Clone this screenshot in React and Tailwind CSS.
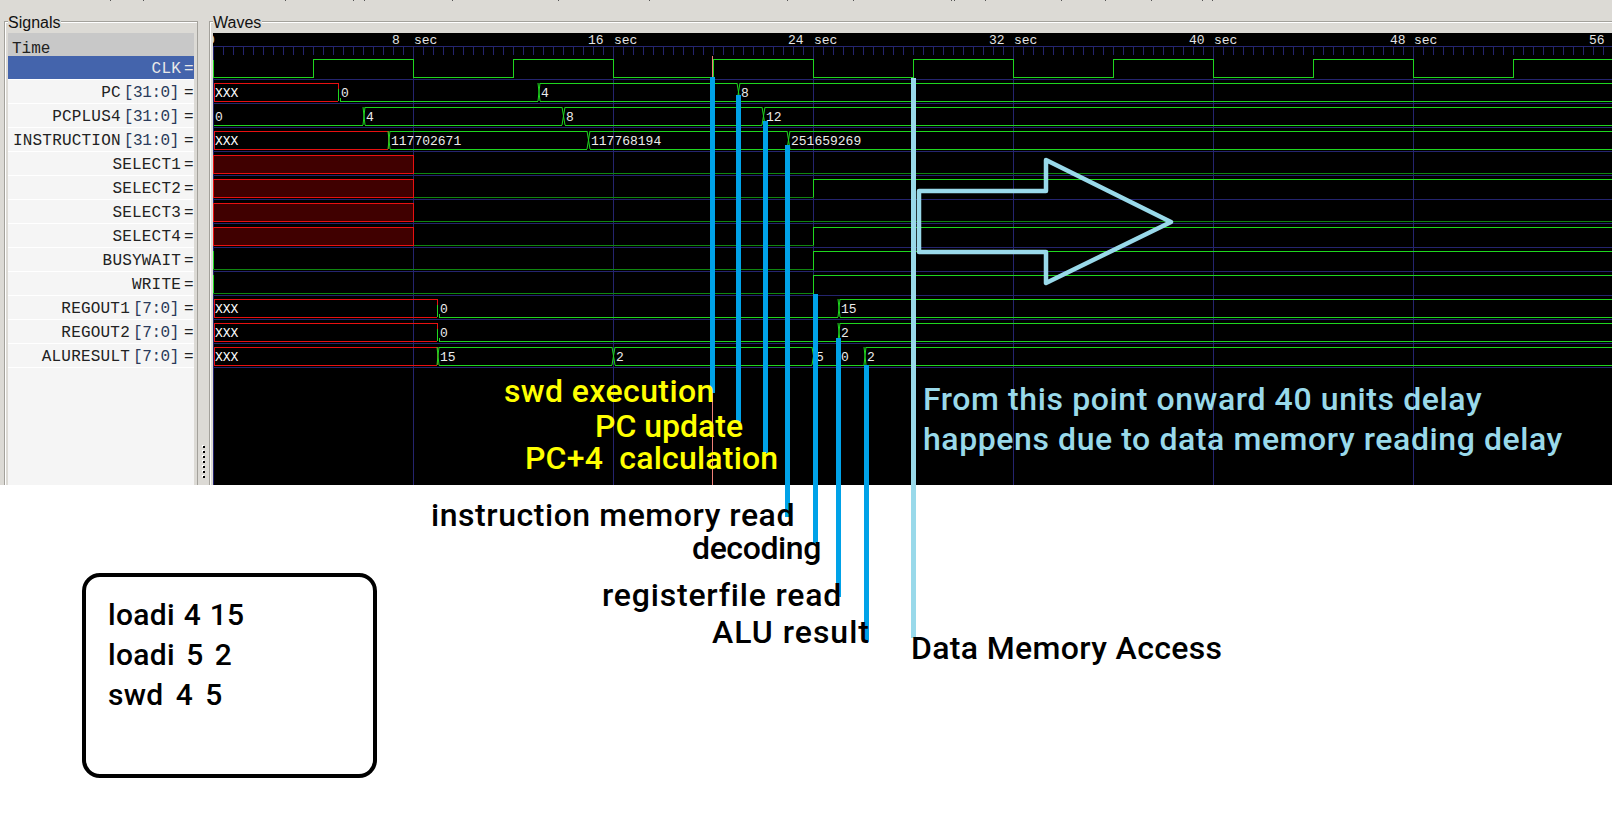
const signals = [
  ['PC', '[31:0]'], ['PCPLUS4', '[31:0]'], ['INSTRUCTION', '[31:0]'], ['SELECT1'], ['SELECT2'], ['SELECT3'], ['SELECT4'],
  ['BUSYWAIT'], ['WRITE'], ['REGOUT1', '[7:0]'], ['REGOUT2', '[7:0]'], ['ALURESULT', '[7:0]'],
];

const END = 1612;
const GRID = '#24246e';
const GREEN = '#1fd61f';
const DARK = '#0f860f';
const RED = '#e81010';

// wave svg starts at x=213, y=33 of the page
const X = (x) => x - 213;
const hi = (k) => 26 + 24 * k;
const lo = (k) => 44 + 24 * k;

// one bus row: segments are [from, to, kind, label]
const buses = [
  { k: 1, segs: [[214, 338, 'x', 'XXX'], [340, 538, 'low', '0'], [540, 737, 'both', '4'], [740, END, 'both', '8']] },
  { k: 2, segs: [[214, 363, 'low', '0'], [365, 562, 'both', '4'], [565, 762, 'both', '8'], [765, END, 'both', '12']] },
  { k: 3, segs: [[214, 388, 'x', 'XXX'], [390, 587, 'both', '117702671'], [590, 787, 'both', '117768194'], [790, END, 'both', '251659269']] },
  { k: 10, segs: [[214, 437, 'x', 'XXX'], [439, 838, 'low', '0'], [840, END, 'both', '15']] },
  { k: 11, segs: [[214, 437, 'x', 'XXX'], [439, 838, 'low', '0'], [840, END, 'both', '2']] },
  { k: 12, segs: [[214, 437, 'x', 'XXX'], [439, 612, 'both', '15'], [615, 812, 'both', '2'], [815, 838, 'low', '5'], [840, 864, 'low', '0'], [866, END, 'both', '2']] },
];

// single bit rows: red block until 8 sec, then low, rising at 24 sec for some
const selects = [
  { k: 4, rises: false }, { k: 5, rises: true }, { k: 6, rises: false }, { k: 7, rises: true },
];

function clockPath() {
  let d = `M0 ${hi(0)}V${lo(0)}`;
  let low = true;
  for (let x = 313; x < END; x += 100) {
    d += `H${X(x)}V${low ? hi(0) : lo(0)}`;
    low = !low;
  }
  return d + `H${X(END)}`;
}

function Waves() {
  const ticks = [];
  for (let x = 213; x < END; x += 10) ticks.push(x);
  const majors = [413, 613, 813, 1013, 1213, 1413];
  const times = [[392, '8'], [588, '16'], [788, '24'], [989, '32'], [1189, '40'], [1390, '48'], [1589, '56']];

  return (
    <svg width="1399" height="452" className="block bg-black" shapeRendering="crispEdges" fontFamily="'Liberation Mono', monospace" fontSize="13">
      {/* ruler */}
      <path d={`M0 13.5H1399`} stroke={GRID} />
      {ticks.map((x) => <path key={x} d={`M${X(x) + 0.5} 13V22`} stroke={GRID} />)}
      <path d="M0.5 13V452" stroke={GRID} />
      {majors.map((x) => <path key={x} d={`M${X(x) + 0.5} 13V452`} stroke={GRID} />)}
      {Array.from({ length: 13 }, (_, k) => (
        <path key={k} d={`M0 ${46.5 + 24 * k}H1399`} stroke={GRID} />
      ))}
      <text x={-6} y="11" fill="#e4e4e4">0</text>
      {times.map(([x, t]) => <text key={t} x={X(x)} y="11" fill="#e4e4e4">{t}</text>)}
      {majors.map((x) => <text key={x} x={X(x) + 1} y="11" fill="#e4e4e4">sec</text>)}

      {/* marker */}
      <path d="M499.5 23V452" stroke="#f08078" />

      {/* clk */}
      <path d={clockPath()} transform="translate(0.5 0.5)" fill="none" stroke={GREEN} />

      {/* select lines */}
      {selects.map(({ k, rises }) => (
        <g key={k}>
          <rect x="0.5" y={hi(k) + 0.5} width="200" height="18" fill="#400000" stroke={RED} />
          {rises ? (
            <>
              <path d={`M201 ${lo(k) + 0.5}H600.5`} stroke={DARK} />
              <path d={`M600.5 ${lo(k)}V${hi(k) + 0.5}H1399`} fill="none" stroke={GREEN} />
            </>
          ) : (
            <path d={`M201 ${lo(k) + 0.5}H1399`} stroke={DARK} />
          )}
        </g>
      ))}

      {/* busywait, write */}
      {[8, 9].map((k) => (
        <g key={k}>
          <path d={`M0.5 ${hi(k)}V${lo(k) + 0.5}H600.5`} fill="none" stroke={DARK} />
          <path d={`M0.5 ${hi(k)}V${lo(k)}`} stroke={GREEN} />
          <path d={`M600.5 ${lo(k) + 0.5}V${hi(k) + 0.5}H1399`} fill="none" stroke={GREEN} />
        </g>
      ))}

      {/* buses */}
      {buses.map(({ k, segs }) => (
        <g key={k}>
          {segs.map(([a, b, kind, label], i) => {
            const stroke = kind === 'x' ? RED : GREEN;
            const prev = segs[i - 1];
            return (
              <g key={i}>
                {kind !== 'low' && <path d={`M${X(a)} ${hi(k) + 0.5}H${X(b)}`} stroke={stroke} />}
                <path d={`M${X(a)} ${lo(k) + 0.5}H${X(b)}`} stroke={stroke} />
                {kind === 'x' && <path d={`M${X(a) + 0.5} ${hi(k)}V${lo(k)}M${X(b) + 0.5} ${hi(k)}V${lo(k)}`} stroke={RED} />}
                {prev && (
                  <path
                    d={kind === 'low' && prev[2] !== 'both'
                      ? `M${X(a) - 1.5} ${hi(k) + 6}V${lo(k)}M${X(a) + 0.5} ${lo(k) - 3}V${lo(k)}`
                      : `M${X(prev[1])} ${hi(k)}L${X(a)} ${lo(k)}M${X(prev[1])} ${lo(k)}L${X(a)} ${hi(k)}`}
                    stroke={GREEN}
                    fill="none"
                    shapeRendering="auto"
                  />
                )}
                <text x={X(a) + 1} y={lo(k) - 4} fill={kind === 'x' ? '#ffffff' : '#ececec'}>{label}</text>
              </g>
            );
          })}
        </g>
      ))}
    </svg>
  );
}

// hand drawn marks on top of the capture
const cyanLines = [
  [710, 77, 393], [736, 95, 422], [763, 121, 453], [785, 145, 517],
  [813, 294, 543], [836, 338, 597], [864, 365, 642],
];

// bottoms of the cropped menu text at the very top of the capture
const specks = [110, 143, 285, 353, 364, 452, 558, 649, 787, 853, 951, 954, 985, 1061, 1105, 1151, 1202, 1212];

function Annotations() {
  return (
    <svg width="1612" height="828" className="absolute inset-0 pointer-events-none">
      {specks.map((x) => <rect key={x} x={x} y="0" width="1" height="1" fill="#555" />)}
      {cyanLines.map(([x, y1, y2]) => (
        <rect key={x} x={x} y={y1} width="5" height={y2 - y1} fill="#00a2e8" />
      ))}
      <rect x="911" y="78" width="5" height="560" fill="#99d9ea" />
      <polygon points="919,191 1046,191 1046,160 1171,222 1046,283 1046,252 919,252" fill="none" stroke="#99d9ea" strokeWidth="4.5" strokeLinejoin="round" />
    </svg>
  );
}

const notes = [
  { text: 'swd execution', left: 504, base: 401, cls: 'text-[#ffff00] tracking-[0.4px]' },
  { text: 'PC update', left: 595, base: 436, cls: 'text-[#ffff00] tracking-[0px]' },
  { text: 'PC+4  calculation', left: 525, base: 468, cls: 'text-[#ffff00] tracking-[0.2px]' },
  { text: 'instruction memory read', left: 431, base: 525, cls: 'text-black tracking-[0.55px]' },
  { text: 'decoding', left: 692, base: 558, cls: 'text-black tracking-[-0.4px]' },
  { text: 'registerfile read', left: 602, base: 605, cls: 'text-black tracking-[0.8px]' },
  { text: 'ALU result', left: 712, base: 642, cls: 'text-black tracking-[1px]' },
  { text: 'Data Memory Access', left: 911, base: 658, cls: 'text-black tracking-[0.35px]' },
  { text: 'From this point onward 40 units delay', left: 923, base: 409, cls: 'text-[#99d9ea] tracking-[0.6px]' },
  { text: 'happens due to data memory reading delay', left: 923, base: 449, cls: 'text-[#99d9ea] tracking-[0.58px]' },
];

function SignalLabel({ name, bus }) {
  return (
    <>
      <span className="tracking-[0.2px]">{name}</span>
      {bus && <span className="ml-[3px] tracking-[-0.4px] text-[#2a3a5a]">{bus}</span>}
      <span className={bus ? 'ml-[5px] w-[10px]' : 'ml-[3px] w-[10px]'}>=</span>
    </>
  );
}

export default function App() {
  return (
    <div className="relative w-[1612px] h-[828px] overflow-hidden bg-white font-['Roboto',sans-serif] font-medium">
      {/* gtkwave window */}
      <div className="flex h-[485px] bg-[#dcdad5] pt-[21px] font-normal">
        <div className="relative ml-[4px] w-[194px] border border-b-0 border-[#a3a19b] px-[3px] pt-[11px] shadow-[inset_1px_1px_0_#fff]">
          <span className="absolute left-[3px] top-[-8px] bg-[#dcdad5] pr-[1px] text-[16px] leading-[18px] text-[#111] font-['Liberation_Sans',sans-serif]">Signals</span>
          <div className="h-[452px] bg-[#f5f5f5] font-['Liberation_Mono',monospace] text-[16px] text-[#222]">
            <div className="h-[23px] bg-[#c8c8c8] pl-[4px] leading-[33px]">Time</div>
            <div className="flex h-[24px] items-center justify-end border-b border-white bg-[#4464ac] pt-[3px] text-[#e8e8e8]">
              <SignalLabel name="CLK" />
            </div>
            {signals.map(([name, bus]) => (
              <div key={name} className="flex h-[24px] items-center justify-end whitespace-pre border-b border-white pt-[3px]">
                <SignalLabel name={name} bus={bus} />
              </div>
            ))}
          </div>
        </div>
        <div className="flex w-[11px] flex-col items-center justify-end gap-[3px] pb-[7px]">
          {[0, 1, 2, 3, 4, 5, 6].map((i) => (
            <div key={i} className="h-[2px] w-[2px] bg-black shadow-[-1px_-1px_0_#fff]" />
          ))}
        </div>
        <div className="relative flex-1 border-t border-l border-[#a3a19b] pl-[3px] pt-[11px] shadow-[inset_1px_1px_0_#fff]">
          <span className="absolute left-[3px] top-[-8px] bg-[#dcdad5] pr-[1px] text-[16px] leading-[18px] text-[#111] font-['Liberation_Sans',sans-serif]">Waves</span>
          <Waves />
        </div>
      </div>

      {/* program listing */}
      <div className="pl-[82px] pt-[88px]">
        <div className="h-[205px] w-[295px] rounded-[18px] border-[4px] border-black pl-[22px] pt-[18px] text-[30px] leading-[40px] tracking-[0.3px] text-black">
          <div className="[word-spacing:1px]">loadi 4 15</div>
          <div className="[word-spacing:3.5px]">loadi 5 2</div>
          <div className="[word-spacing:4.5px]">swd 4 5</div>
        </div>
      </div>

      <Annotations />
      {notes.map((n) => (
        <span
          key={n.text}
          className={`absolute whitespace-pre text-[32px] leading-none ${n.cls}`}
          style={{ left: n.left, top: n.base - 26 }}
        >
          {n.text}
        </span>
      ))}
    </div>
  );
}
